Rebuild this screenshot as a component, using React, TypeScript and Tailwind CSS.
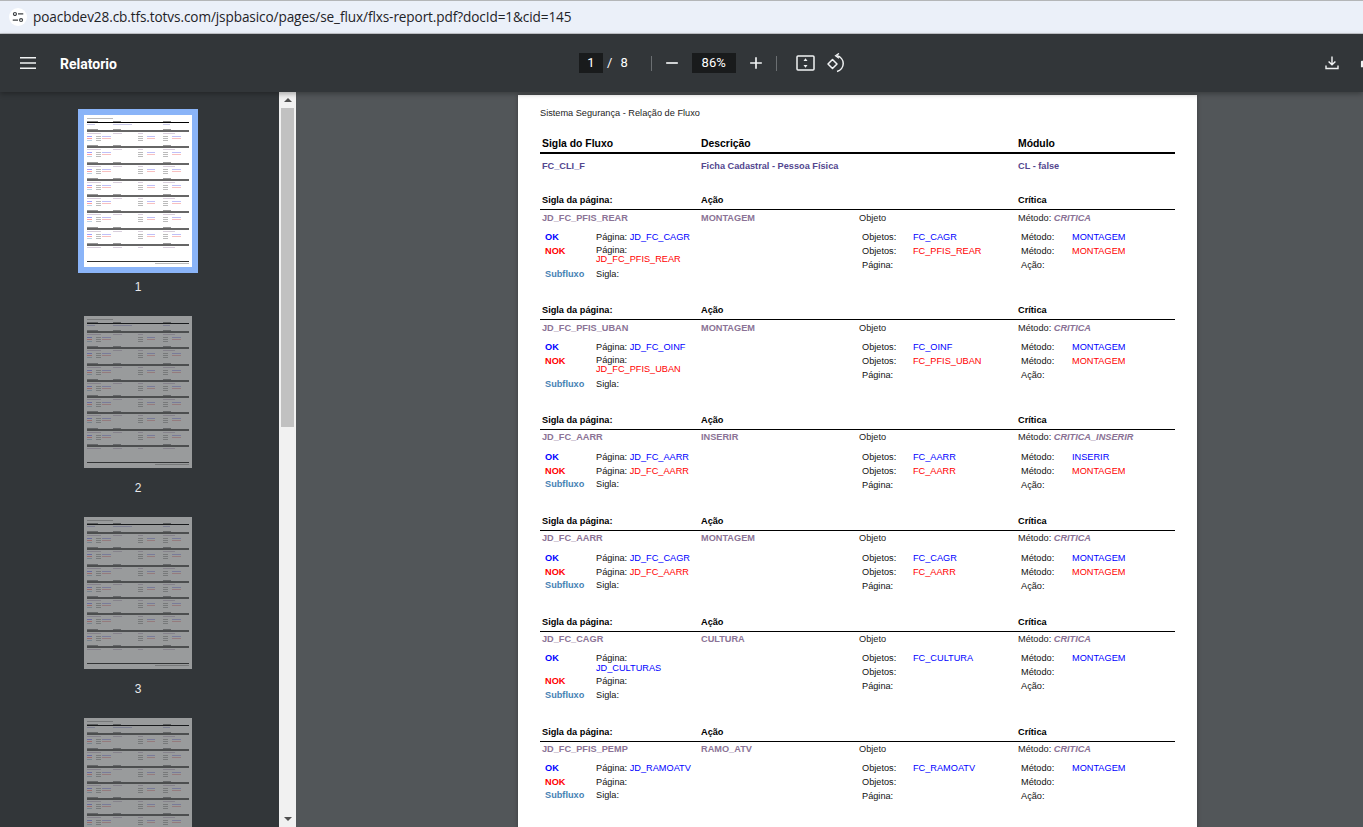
import React from 'react';

type Line = { label: string; value?: string; color?: 'blue' | 'red'; wrap?: boolean };

type Block = {
    sigla: string;
    acao: string;
    metodo: string;
    rowTop: string;
    okTop: string;
    ok: Line;
    nok: Line;
    sub: string;
    objetos: Line[];
    metodos: Line[];
};

const blue: 'blue' = 'blue';
const red: 'red' = 'red';

const blocks: Block[] = [
    {
        sigla: 'JD_FC_PFIS_REAR',
        acao: 'MONTAGEM',
        metodo: 'CRITICA',
        rowTop: 'mt-[1px]',
        okTop: 'mt-[5px]',
        ok: { label: 'Página:', value: 'JD_FC_CAGR', color: blue },
        nok: { label: 'Página:', value: 'JD_FC_PFIS_REAR', color: red, wrap: true },
        sub: 'Sigla:',
        objetos: [
            { label: 'Objetos:', value: 'FC_CAGR', color: blue },
            { label: 'Objetos:', value: 'FC_PFIS_REAR', color: red },
            { label: 'Página:' },
        ],
        metodos: [
            { label: 'Método:', value: 'MONTAGEM', color: blue },
            { label: 'Método:', value: 'MONTAGEM', color: red },
            { label: 'Ação:' },
        ],
    },
    {
        sigla: 'JD_FC_PFIS_UBAN',
        acao: 'MONTAGEM',
        metodo: 'CRITICA',
        rowTop: 'mt-[1px]',
        okTop: 'mt-[5px]',
        ok: { label: 'Página:', value: 'JD_FC_OINF', color: blue },
        nok: { label: 'Página:', value: 'JD_FC_PFIS_UBAN', color: red, wrap: true },
        sub: 'Sigla:',
        objetos: [
            { label: 'Objetos:', value: 'FC_OINF', color: blue },
            { label: 'Objetos:', value: 'FC_PFIS_UBAN', color: red },
            { label: 'Página:' },
        ],
        metodos: [
            { label: 'Método:', value: 'MONTAGEM', color: blue },
            { label: 'Método:', value: 'MONTAGEM', color: red },
            { label: 'Ação:' },
        ],
    },
    {
        sigla: 'JD_FC_AARR',
        acao: 'INSERIR',
        metodo: 'CRITICA_INSERIR',
        rowTop: 'mt-0',
        okTop: 'mt-[6px]',
        ok: { label: 'Página:', value: 'JD_FC_AARR', color: blue },
        nok: { label: 'Página:', value: 'JD_FC_AARR', color: red },
        sub: 'Sigla:',
        objetos: [
            { label: 'Objetos:', value: 'FC_AARR', color: blue },
            { label: 'Objetos:', value: 'FC_AARR', color: red },
            { label: 'Página:' },
        ],
        metodos: [
            { label: 'Método:', value: 'INSERIR', color: blue },
            { label: 'Método:', value: 'MONTAGEM', color: red },
            { label: 'Ação:' },
        ],
    },
    {
        sigla: 'JD_FC_AARR',
        acao: 'MONTAGEM',
        metodo: 'CRITICA',
        rowTop: 'mt-0',
        okTop: 'mt-[6px]',
        ok: { label: 'Página:', value: 'JD_FC_CAGR', color: blue },
        nok: { label: 'Página:', value: 'JD_FC_AARR', color: red },
        sub: 'Sigla:',
        objetos: [
            { label: 'Objetos:', value: 'FC_CAGR', color: blue },
            { label: 'Objetos:', value: 'FC_AARR', color: red },
            { label: 'Página:' },
        ],
        metodos: [
            { label: 'Método:', value: 'MONTAGEM', color: blue },
            { label: 'Método:', value: 'MONTAGEM', color: red },
            { label: 'Ação:' },
        ],
    },
    {
        sigla: 'JD_FC_CAGR',
        acao: 'CULTURA',
        metodo: 'CRITICA',
        rowTop: 'mt-0',
        okTop: 'mt-[5px]',
        ok: { label: 'Página:', value: 'JD_CULTURAS', color: blue, wrap: true },
        nok: { label: 'Página:' },
        sub: 'Sigla:',
        objetos: [
            { label: 'Objetos:', value: 'FC_CULTURA', color: blue },
            { label: 'Objetos:' },
            { label: 'Página:' },
        ],
        metodos: [
            { label: 'Método:', value: 'MONTAGEM', color: blue },
            { label: 'Método:' },
            { label: 'Ação:' },
        ],
    },
    {
        sigla: 'JD_FC_PFIS_PEMP',
        acao: 'RAMO_ATV',
        metodo: 'CRITICA',
        rowTop: 'mt-0',
        okTop: 'mt-[5px]',
        ok: { label: 'Página:', value: 'JD_RAMOATV', color: blue },
        nok: { label: 'Página:' },
        sub: 'Sigla:',
        objetos: [
            { label: 'Objetos:', value: 'FC_RAMOATV', color: blue },
            { label: 'Objetos:' },
            { label: 'Página:' },
        ],
        metodos: [
            { label: 'Método:', value: 'MONTAGEM', color: blue },
            { label: 'Método:' },
            { label: 'Ação:' },
        ],
    },
];

const valueColor = (c?: 'blue' | 'red') => (c === 'red' ? 'text-[#ff0000]' : 'text-[#0000ff]');

const SubList = ({ lines }: { lines: Line[] }) => (
    <div className="flex flex-col pl-[3px] leading-[14px] text-[#111]">
        {lines.map((l, i) => (
            <div key={i} className="grid h-[13.75px] grid-cols-[51px_1fr]">
                <span>{l.label}</span>
                <span className={valueColor(l.color)}>{l.value}</span>
            </div>
        ))}
    </div>
);

const ReportBlock = ({ b }: { b: Block }) => {
    const twoLineOk = b.ok.wrap;
    const twoLineNok = b.nok.wrap;
    return (
        <div className="flex flex-col text-[9.2px]">
            <div className="grid grid-cols-[159px_159px_158px_1fr] border-b border-black px-[2px] pb-[3px] leading-[11px] font-bold text-black">
                <span>Sigla da página:</span>
                <span>Ação</span>
                <span />
                <span>Crítica</span>
            </div>
            <div className={`grid grid-cols-[159px_159px_158px_1fr] px-[2px] ${b.rowTop} leading-[14px] text-[#222]`}>
                <span className="font-bold text-[#8b7396]">{b.sigla}</span>
                <span className="font-bold text-[#8b7396]">{b.acao}</span>
                <span className="-ml-[1px]">Objeto</span>
                <span>
                    Método: <span className="font-bold italic text-[#8b7396]">{b.metodo}</span>
                </span>
            </div>
            <div className={`${b.okTop} grid grid-cols-[317px_159px_1fr] pl-[2px]`}>
                <div className="flex flex-col pl-[3px] leading-[14px] text-[#111]">
                    <div className={`grid grid-cols-[51px_1fr] ${twoLineOk ? 'h-[23px]' : 'h-[13.5px]'}`}>
                        <span className="font-bold text-[#0000ff]">OK</span>
                        {twoLineOk ? (
                            <span className="pt-[2px] leading-[10px]">
                                {b.ok.label}
                                <br />
                                <span className={valueColor(b.ok.color)}>{b.ok.value}</span>
                            </span>
                        ) : (
                            <span>
                                {b.ok.label} <span className={valueColor(b.ok.color)}>{b.ok.value}</span>
                            </span>
                        )}
                    </div>
                    <div className={`grid grid-cols-[51px_1fr] ${twoLineNok ? 'h-[23px]' : 'h-[13.5px]'}`}>
                        <span className="font-bold text-[#ff0000]">NOK</span>
                        {twoLineNok ? (
                            <span className="pt-[2px] leading-[9.5px]">
                                {b.nok.label}
                                <br />
                                <span className={valueColor(b.nok.color)}>{b.nok.value}</span>
                            </span>
                        ) : (
                            <span>
                                {b.nok.label} {b.nok.value && <span className={valueColor(b.nok.color)}>{b.nok.value}</span>}
                            </span>
                        )}
                    </div>
                    <div className="grid h-[14px] grid-cols-[51px_1fr]">
                        <span className="font-bold text-[#4682b4]">Subfluxo</span>
                        <span>{b.sub}</span>
                    </div>
                </div>
                <SubList lines={b.objetos} />
                <SubList lines={b.metodos} />
            </div>
        </div>
    );
};

const Bar = ({ w, c = 'bg-[#bbb]' }: { w: number; c?: string }) => (
    <div className={`h-[1px] shrink-0 ${c}`} style={{ width: w }} />
);

const ThumbRow = ({ a, b, c, d, cls }: { a: number; b: number; c: number; d: number; cls: string }) => (
    <div className="grid h-[1px] grid-cols-[26px_25px_25px_1fr]">
        <Bar w={a} c={cls} />
        <Bar w={b} c={cls} />
        <Bar w={c} c={cls} />
        <Bar w={d} c={cls} />
    </div>
);

const ThumbSub = ({ ok, val, obj, tone }: { ok: string; val: string; obj: string; tone: string }) => (
    <div className="grid h-[1px] grid-cols-[9px_42px_9px_16px_9px_1fr]">
        <Bar w={5} c={ok} />
        <div className="flex gap-[1px]">
            <Bar w={5} />
            <Bar w={val ? 9 : 0} c={val} />
        </div>
        <Bar w={5} />
        <Bar w={obj ? 8 : 0} c={obj} />
        <Bar w={5} />
        <Bar w={tone ? 9 : 0} c={tone} />
    </div>
);

const ThumbBlock = ({ last }: { last?: boolean }) => (
    <div className="flex h-[16.3px] flex-col">
        <ThumbRow a={11} b={8} c={0} d={8} cls="bg-[#999]" />
        <div className="h-[2px] bg-[#666]" />
        <div className="mt-[1px]">
            <ThumbRow a={14} b={9} c={5} d={12} cls="bg-[#d8cedc]" />
        </div>
        {!last && (
            <div className="mt-[2px] flex flex-col gap-[1px]">
                <ThumbSub ok="bg-[#a0a0ff]" val="bg-[#c0c0f8]" obj="bg-[#c0c0f8]" tone="bg-[#c0c0f8]" />
                <ThumbSub ok="bg-[#ffa0a0]" val="bg-[#f8c0c0]" obj="bg-[#f8c0c0]" tone="bg-[#f8c0c0]" />
                <ThumbSub ok="bg-[#bcd2e4]" val="" obj="" tone="" />
            </div>
        )}
    </div>
);

const Thumb = ({ n, selected }: { n?: number; selected?: boolean }) => (
    <div className="flex flex-col items-center">
        <div className={selected ? 'border-[6px] border-[#8ab4f8]' : 'my-[6px] opacity-50'}>
            <div className="flex h-[152px] w-[108px] flex-col bg-white px-[3px] pt-[3px] blur-[0.4px]">
                <Bar w={26} />
                <div className="mt-[2px]">
                    <ThumbRow a={11} b={8} c={0} d={8} cls="bg-[#888]" />
                </div>
                <div className="h-[1px] bg-black" />
                <div className="mt-[1px]">
                    <ThumbRow a={8} b={19} c={0} d={7} cls="bg-[#c8c8e8]" />
                </div>
                <div className="mt-[4px]" />
                {[0, 1, 2, 3, 4, 5, 6, 7].map((i) => (
                    <ThumbBlock key={i} last={i === 7} />
                ))}
                <div className="mt-auto mb-[3px] flex flex-col items-end">
                    <div className="h-[1px] w-full bg-[#333]" />
                    <div className="mt-[1px]">
                        <Bar w={34} />
                    </div>
                </div>
            </div>
        </div>
        {n && <div className="mt-[7px] mb-[16px] h-[14px] text-[12px] leading-[14px] text-[#e8eaed]">{n}</div>}
    </div>
);

const IconBtn = ({ children, cls }: { children: React.ReactNode; cls: string }) => (
    <svg viewBox="0 0 24 24" className={`shrink-0 ${cls}`} fill="none" stroke="#f1f3f4">
        {children}
    </svg>
);

const App = () => {
    return (
        <div className="flex h-screen w-full flex-col overflow-hidden bg-[#525659] font-['Liberation_Sans',Arial,sans-serif]">
            {/* barra de endereco */}
            <div className="flex h-[34px] shrink-0 items-center gap-[6px] border-t border-b border-t-[#b4b6b8] border-b-[#c4c7cc] bg-[#ebf0f9] pl-[9px]">
                <div className="flex h-[18px] w-[18px] items-center justify-center rounded-full bg-white">
                    <svg viewBox="0 0 16 16" className="h-[14px] w-[14px]" fill="none" stroke="#3c4043" strokeWidth="1.3">
                        <circle cx="4.5" cy="4.5" r="1.7" />
                        <path d="M8 4.5h6M2 11.5h6" />
                        <circle cx="11.5" cy="11.5" r="1.7" />
                    </svg>
                </div>
                <span className="font-['Open_Sans',sans-serif] text-[13.6px] tracking-[-0.1px] text-[#1f2328]">
                    poacbdev28.cb.tfs.totvs.com/jspbasico/pages/se_flux/flxs-report.pdf?docId=1&amp;cid=145
                </span>
            </div>

            {/* toolbar do pdf */}
            <div className="z-10 flex h-[58px] shrink-0 items-center overflow-hidden bg-[#323639] font-['Roboto',sans-serif] text-white shadow-[0_2px_5px_rgba(0,0,0,0.3)]">
                <svg viewBox="0 0 16 12" className="ml-[20px] h-[12px] w-[16px] shrink-0" fill="#f1f3f4">
                    <path d="M0 0h16v1.6H0zM0 5.2h16v1.6H0zM0 10.4h16V12H0z" />
                </svg>
                <span className="ml-[24px] w-[519px] shrink-0 pt-[2px] text-[14px] font-bold">Relatorio</span>
                <div className="flex h-[20px] w-[24px] shrink-0 items-center justify-center bg-[#191b1c] text-[13px]">1</div>
                <span className="ml-[4px] text-[13px]">/</span>
                <span className="ml-[8px] text-[13px]">8</span>
                <div className="ml-[23px] h-[15px] w-px shrink-0 bg-[#6b6f72]" />
                <IconBtn cls="ml-[10px] h-[20px] w-[20px]">
                    <path d="M5 12h14" strokeWidth="2" />
                </IconBtn>
                <div className="ml-[10px] flex h-[20px] w-[44px] shrink-0 items-center justify-center bg-[#191b1c] text-[13px]">86%</div>
                <IconBtn cls="ml-[10px] h-[20px] w-[20px]">
                    <path d="M5 12h14M12 5v14" strokeWidth="2" />
                </IconBtn>
                <div className="ml-[10px] h-[15px] w-px shrink-0 bg-[#6b6f72]" />
                <svg viewBox="0 0 19 16" className="ml-[19px] h-[16px] w-[19px] shrink-0" fill="none">
                    <rect x="1" y="1" width="17" height="14" rx="1" stroke="#f1f3f4" strokeWidth="1.5" />
                    <path d="M9.5 3.2l2 2.8h-4zM9.5 12.8l2-2.8h-4z" fill="#f1f3f4" />
                </svg>
                <svg viewBox="0 0 20 20" className="ml-[12px] h-[20px] w-[20px] shrink-0" fill="none" stroke="#f1f3f4" strokeWidth="1.5">
                    <path d="M1 11l4.5-4.5 4.5 4.5-4.5 4.5z" strokeLinejoin="round" />
                    <path d="M10 2.8a8 8 0 0 1 0 15.6" />
                    <path d="M12 0.4l-3.4 2.4 3.4 2.4" strokeWidth="1.3" />
                </svg>
                <svg viewBox="0 0 14 14" className="ml-[478px] h-[14px] w-[14px] shrink-0" fill="none" stroke="#f1f3f4" strokeWidth="1.4">
                    <path d="M7 0.5v8M3.6 5.4L7 8.8l3.4-3.4M1 9.5v3h12v-3" />
                </svg>
                <svg viewBox="0 0 16 16" className="ml-[21px] h-[15px] w-[15px] shrink-0" fill="#f1f3f4">
                    <path d="M4 1h8v3H4zM2 5h12a1 1 0 0 1 1 1v6h-3v3H4v-3H1V6a1 1 0 0 1 1-1z" />
                </svg>
            </div>

            <div className="flex min-h-0 flex-1">
                {/* miniaturas */}
                <div className="flex w-[279px] shrink-0 flex-col items-center overflow-hidden bg-[#323639] pt-[17px] pr-[3px]">
                    <Thumb n={1} selected />
                    <Thumb n={2} />
                    <Thumb n={3} />
                    <Thumb />
                </div>

                {/* barra de rolagem */}
                <div className="flex w-[17px] shrink-0 flex-col items-center bg-[#f1f1f1]">
                    <div className="flex h-[16px] items-center justify-center">
                        <div className="h-0 w-0 border-x-[4px] border-b-[4px] border-x-transparent border-b-[#505050]" />
                    </div>
                    <div className="h-[319px] w-[13px] bg-[#c1c1c1]" />
                    <div className="flex-1" />
                    <div className="flex h-[16px] items-center justify-center">
                        <div className="h-0 w-0 border-x-[4px] border-t-[4px] border-x-transparent border-t-[#505050]" />
                    </div>
                </div>

                {/* pagina */}
                <div className="min-w-0 flex-1 pt-[3px] pl-[222px]">
                    <div className="h-[800px] w-[679px] bg-white px-[22px] shadow-[0_0_4px_rgba(0,0,0,0.3)]">
                        <div className="pt-[12px] text-[9.2px] leading-[12px] text-[#222]">Sistema Segurança - Relação de Fluxo</div>
                        <div className="mt-[18px] grid grid-cols-[159px_159px_158px_1fr] border-b-2 border-black px-[2px] pb-[2px] text-[10.4px] leading-[13px] font-bold text-black">
                            <span>Sigla do Fluxo</span>
                            <span>Descrição</span>
                            <span />
                            <span>Módulo</span>
                        </div>
                        <div className="mt-[6px] grid grid-cols-[159px_159px_158px_1fr] px-[2px] text-[9.2px] leading-[13px] font-bold text-[#53478f]">
                            <span>FC_CLI_F</span>
                            <span className="col-span-2">Ficha Cadastral - Pessoa Física</span>
                            <span>CL - false</span>
                        </div>
                        <div className="h-[22px]" />
                        <div className="flex flex-col">
                            {blocks.map((b, i) => (
                                <div key={i} className={i === 2 || i === 3 ? 'h-[101px]' : 'h-[110px]'}>
                                    <ReportBlock b={b} />
                                </div>
                            ))}
                        </div>
                    </div>
                </div>
            </div>
        </div>
    );
};

export default App;
